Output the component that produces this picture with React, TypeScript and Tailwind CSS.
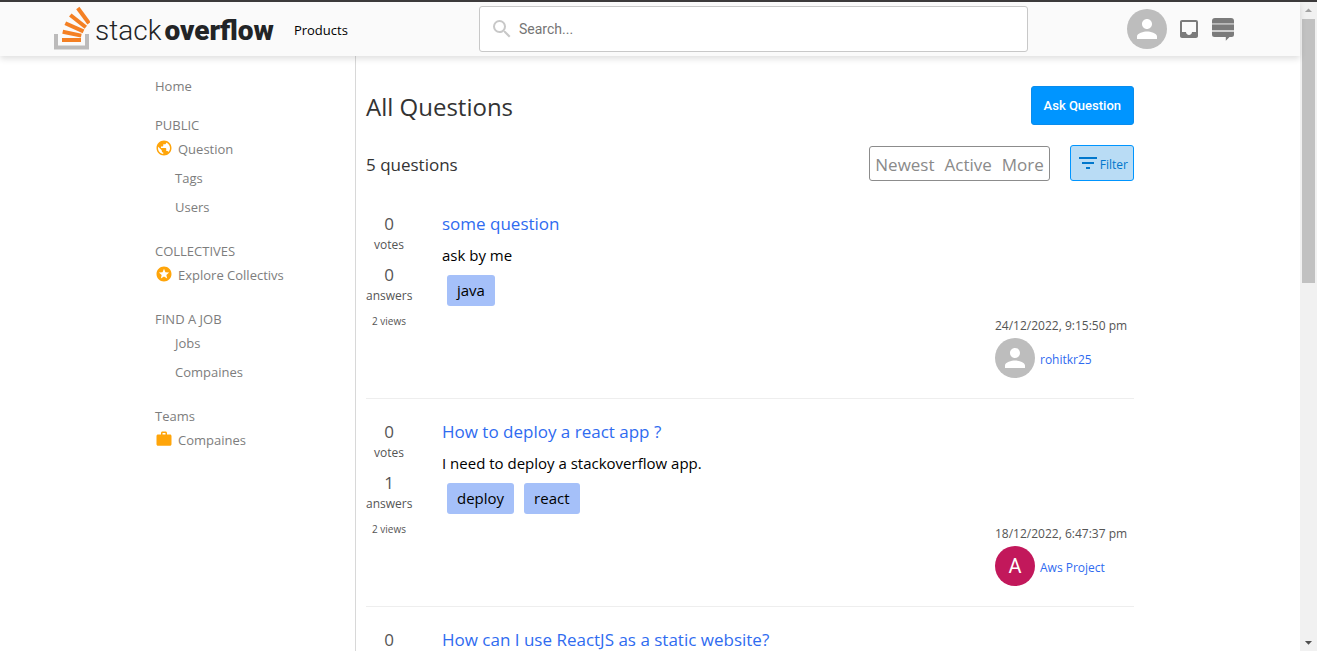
import React from "react";
import {
  MdFilterList,
  MdInbox,
  MdPerson,
  MdPublic,
  MdSearch,
  MdStars,
  MdWork,
  MdArrowDropUp,
  MdArrowDropDown,
} from "react-icons/md";

type Question = {
  id: number;
  votes: number;
  answers: number;
  views: number;
  title: string;
  body: string;
  tags: string[];
  date: string;
  author: string;
  initial?: string;
};

const questions: Question[] = [
  {
    id: 1,
    votes: 0,
    answers: 0,
    views: 2,
    title: "some question",
    body: "ask by me",
    tags: ["java"],
    date: "24/12/2022, 9:15:50 pm",
    author: "rohitkr25",
  },
  {
    id: 2,
    votes: 0,
    answers: 1,
    views: 2,
    title: "How to deploy a react app ?",
    body: "I need to deploy a stackoverflow app.",
    tags: ["deploy", "react"],
    date: "18/12/2022, 6:47:37 pm",
    author: "Aws Project",
    initial: "A",
  },
  {
    id: 3,
    votes: 0,
    answers: 0,
    views: 2,
    title: "How can I use ReactJS as a static website?",
    body: "",
    tags: [],
    date: "",
    author: "",
  },
];

function Logo() {
  return (
    <a href="#" className="flex items-center gap-[5px]">
      <svg viewBox="0 0 36 46" className="h-[46px] w-9" fill="none" aria-hidden="true">
        <path d="M2 28V41.5H33V28" stroke="#bcbbbb" strokeWidth="4" />
        <g stroke="#f48024" strokeWidth="4">
          <path d="M8 34H27" />
          <path d="M8.7 25.8L27.3 29.6" />
          <path d="M11.3 17.2L29.5 25.4" />
          <path d="M16.3 9L31.8 21.2" />
          <path d="M23.8 2L35 17.3" />
        </g>
      </svg>
      <span className="flex items-baseline gap-[3px] pt-1 font-[Roboto,sans-serif] text-[28px] leading-8 text-[#222426]">
        <span className="font-light">stack</span>
        <span className="font-black">overflow</span>
      </span>
    </a>
  );
}

function StackExchangeIcon() {
  return (
    <svg viewBox="0 0 22 23" className="h-[23px] w-[22px]" fill="#7b7b7b" aria-hidden="true">
      <path d="M0 5.4V3a3 3 0 0 1 3-3h16a3 3 0 0 1 3 3v2.4z" />
      <path d="M0 6.4h22V12H0z" />
      <path d="M0 12h22v2H0z" fill="#d0d0d0" />
      <path d="M0 14h22v2.500a2.500 2.500 0 0 1-2.500 2.500H17.500L13.800 22.800V19H2.500A2.500 2.500 0 0 1 0 16.500z" />
    </svg>
  );
}

function Avatar({ initial }: { initial?: string }) {
  return initial ? (
    <span className="flex size-10 shrink-0 items-center justify-center rounded-full bg-[#c2185b] font-[Roboto,sans-serif] text-xl text-white">
      {initial}
    </span>
  ) : (
    <span className="flex size-10 shrink-0 items-center justify-center rounded-full bg-[#bdbdbd] text-white">
      <MdPerson className="size-[30px]" />
    </span>
  );
}

function Header() {
  return (
    <header className="relative z-10 flex h-[54px] shrink-0 items-center bg-[#fafafa] pr-[66px] pl-[54px] shadow-[0_3px_6px_rgba(0,0,0,0.12)]">
      <div className="flex w-[425px] shrink-0 items-center gap-5">
        <Logo />
        <a href="#" className="pt-1 text-[13px] text-black">
          Products
        </a>
      </div>
      <label className="flex h-[46px] min-w-0 flex-1 items-center gap-[5px] rounded-[3px] border border-[#c8c8c8] bg-white px-[10px]">
        <MdSearch className="size-6 shrink-0 text-[#c8c8c8]" />
        <input
          type="text"
          aria-label="Search"
          placeholder="Search..."
          className="min-w-0 flex-1 bg-transparent font-[Roboto,sans-serif] text-sm outline-none placeholder:text-[#757575]"
        />
      </label>
      <div className="ml-[99px] flex items-center gap-[10px]">
        <Avatar />
        <MdInbox className="mr-px size-6 text-[#7b7b7b]" />
        <StackExchangeIcon />
      </div>
    </header>
  );
}

type Item = { label: string; icon?: React.ReactNode };

const sections: { title: string; items: Item[] }[] = [
  { title: "Home", items: [] },
  {
    title: "PUBLIC",
    items: [{ label: "Question", icon: <MdPublic /> }, { label: "Tags" }, { label: "Users" }],
  },
  { title: "COLLECTIVES", items: [{ label: "Explore Collectivs", icon: <MdStars /> }] },
  { title: "FIND A JOB", items: [{ label: "Jobs" }, { label: "Compaines" }] },
  { title: "Teams", items: [{ label: "Compaines", icon: <MdWork /> }] },
];

function Sidebar() {
  return (
    <nav className="flex w-[201px] shrink-0 flex-col gap-5 border-r border-[#d8d8d8] pt-[21px] text-[13px] text-[#7d7d7d]">
      {sections.map((section) => (
        <div key={section.title}>
          {section.items.length === 0 ? (
            <a href="#" className="flex h-[19px] items-center">
              {section.title}
            </a>
          ) : (
            <h3 className="flex h-[19px] items-center">{section.title}</h3>
          )}
          {section.items.map((item) =>
            item.icon ? (
              <a key={item.label} href="#" className="flex h-[29px] items-center gap-[5px]">
                <span className="pb-1 text-lg text-[#ffa50a]">{item.icon}</span>
                {item.label}
              </a>
            ) : (
              <a key={item.label} href="#" className="flex h-[29px] items-center pl-5">
                {item.label}
              </a>
            ),
          )}
        </div>
      ))}
    </nav>
  );
}

function Stat({ value, label }: { value: number; label: string }) {
  return (
    <div className="mb-[10px] text-center">
      <p className="text-[17px] leading-[26px]">{value}</p>
      <p className="text-xs leading-[15px]">{label}</p>
    </div>
  );
}

function QuestionRow({ q }: { q: Question }) {
  return (
    <article className="flex gap-[30px] border-b border-[#eeeeee] py-5">
      <div className="w-[46px] shrink-0 text-[#555555]">
        <Stat value={q.votes} label="votes" />
        <Stat value={q.answers} label="answers" />
        <p className="text-center text-[10px] leading-4">{q.views} views</p>
      </div>
      <div className="flex min-w-0 flex-1 flex-col">
        <a href="#" className="text-[17px] leading-[26px] text-[#2f6bf0]">
          {q.title}
        </a>
        <p className="mt-2 text-[15px] leading-[21px] text-black">{q.body}</p>
        <div className="mx-[5px] mt-[9px] flex gap-[10px]">
          {q.tags.map((tag) => (
            <span
              key={tag}
              className="flex h-[31px] items-center rounded-[3px] bg-[#a5c0f9] px-[10px] text-[15px] text-black"
            >
              {tag}
            </span>
          ))}
        </div>
        <div className="mt-[10px] min-w-[139px] self-end">
          <p className="text-xs leading-[19px] text-[#555555]">{q.date}</p>
          <div className="mt-[3px] flex items-center gap-[5px] text-xs text-[#2f6bf0]">
            <Avatar initial={q.initial} />
            <a href="#" className="pt-[3px]">
              {q.author}
            </a>
          </div>
        </div>
      </div>
    </article>
  );
}

function Scrollbar() {
  return (
    <div className="flex w-[17px] shrink-0 flex-col items-center bg-[#f1f1f1]" aria-hidden="true">
      <MdArrowDropUp className="h-[17px] w-[17px] shrink-0 text-[#a3a3a3]" />
      <div className="flex w-full flex-1 flex-col items-center">
        <div className="h-[43%] w-[13px] bg-[#c1c1c1]" />
      </div>
      <MdArrowDropDown className="h-[17px] w-[17px] shrink-0 text-[#505050]" />
    </div>
  );
}

export default function App() {
  return (
    <div className="flex h-screen overflow-hidden border-t-2 border-[#3c3a3b] bg-white font-['Open_Sans','Noto_Sans',sans-serif]">
      <div className="flex min-w-0 flex-1 flex-col">
        <Header />
        <div className="min-h-0 flex-1 overflow-y-auto [scrollbar-width:none]">
          <div className="mx-auto flex max-w-[990px]">
            <Sidebar />
            <main className="min-w-0 flex-1 pt-[30px] pr-[11px] pl-[10px]">
              <div className="flex items-center justify-between">
                <h1 className="pt-[3px] text-2xl text-[#333333]">All Questions</h1>
                <button
                  type="button"
                  className="h-[39px] rounded-[3px] border border-[#0a8cec] bg-[#0095ff] px-3 font-[Roboto,sans-serif] text-[13px] font-medium text-white"
                >
                  Ask Question
                </button>
              </div>
              <div className="mt-5 flex items-center justify-between">
                <p className="pt-[3px] text-[17px] text-[#333333]">5 questions</p>
                <div className="flex items-center gap-5">
                  <div className="flex h-[35px] items-center gap-[10px] rounded-[3px] border border-[#8c8c8c] px-[5px] pt-[3px] text-[17px] text-[#8a8a8a]">
                    <a href="#">Newest</a>
                    <a href="#">Active</a>
                    <a href="#">More</a>
                  </div>
                  <button
                    type="button"
                    className="flex h-9 items-center rounded-[3px] border border-[#0095ff] bg-[#b9dcf5] px-[5px] text-xs text-[#0077cc]"
                  >
                    <MdFilterList className="size-6" />
                    <span className="pt-[3px]">Filter</span>
                  </button>
                </div>
              </div>
              <div className="mt-[10px]">
                {questions.map((q) => (
                  <QuestionRow key={q.id} q={q} />
                ))}
              </div>
            </main>
          </div>
        </div>
      </div>
      <Scrollbar />
    </div>
  );
}
